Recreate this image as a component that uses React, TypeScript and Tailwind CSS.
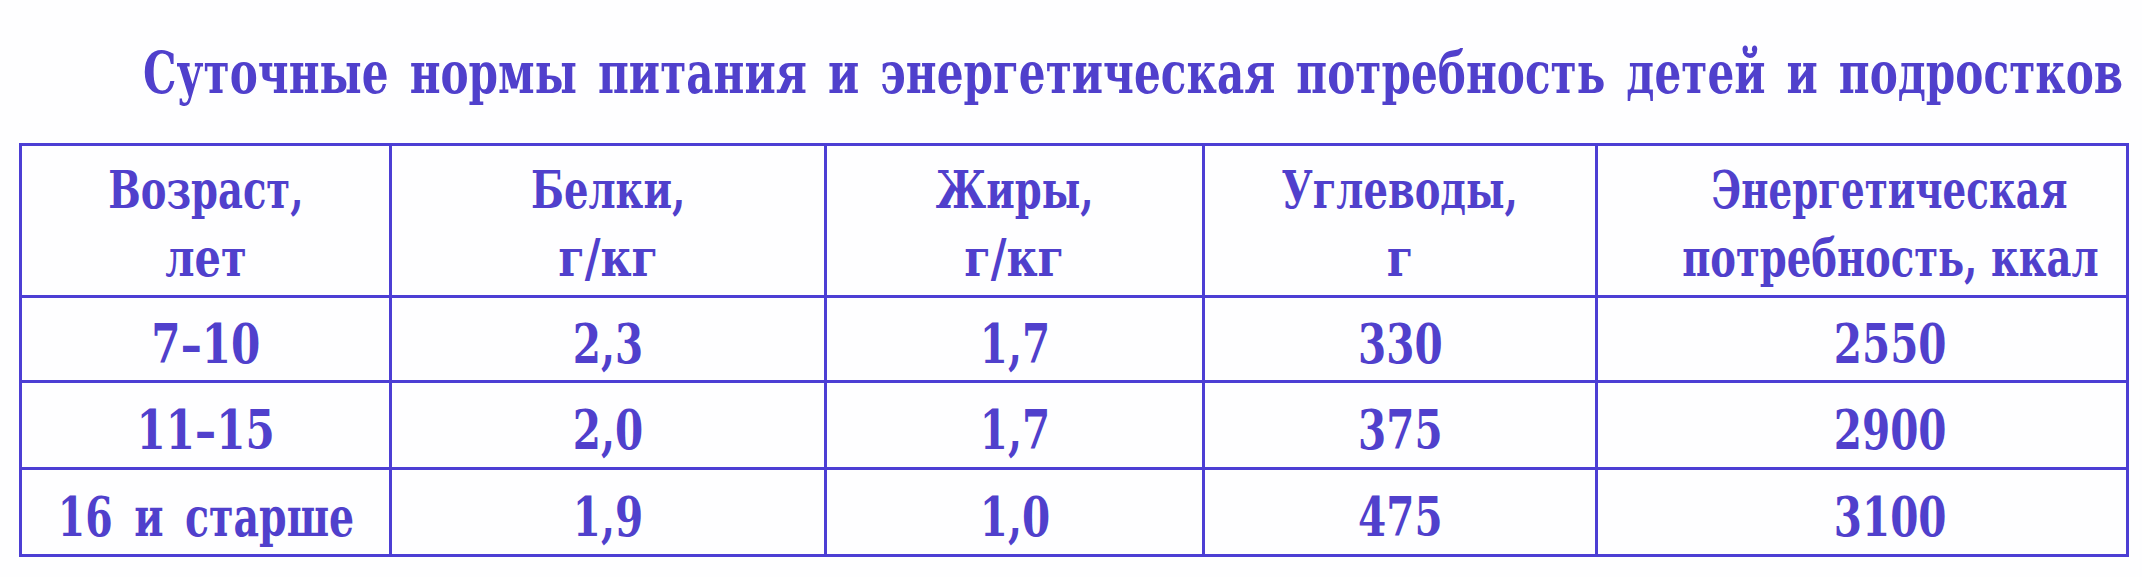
const rows = [
  ['7–10', '2,3', '1,7', '330', '2550'],
  ['11–15', '2,0', '1,7', '375', '2900'],
  ['16 и старше', '1,9', '1,0', '475', '3100'],
];

const headers = [
  ['Возраст,', 'лет'],
  ['Белки,', 'г/кг'],
  ['Жиры,', 'г/кг'],
  ['Углеводы,', 'г'],
  ['Энергетическая', 'потребность, ккал'],
];

const colWidths = ['w-[370px]', 'w-[435px]', 'w-[378px]', 'w-[393px]', 'w-[531px]'];

// the printed face is a narrow schoolbook serif; DejaVu Serif is squeezed sideways to match.
const squeeze: Record<string, string> = {
  лет: 'scale-x-[0.8]',
  'г/кг': 'scale-x-[0.83]',
  г: 'scale-x-[0.83]',
  Энергетическая: 'scale-x-[0.716]',
  '16 и старше': 'scale-x-[0.73]',
  '7–10': 'scale-x-[0.78]',
  '11–15': 'scale-x-[0.78]',
};

// flex keeps the unscaled box centred even when it is wider than the cell
const Narrow = ({ children, digits }: { children: string; digits?: boolean }) => (
  <div className="flex justify-center">
    <span
      className={`shrink-0 origin-center whitespace-nowrap ${
        squeeze[children] ?? (digits ? 'scale-x-[0.75]' : 'scale-x-[0.74]')
      }`}
    >
      {children}
    </span>
  </div>
);

// last column's text sits right of centre in the print
const cellPad = (j: number) => (j === 4 ? 'pl-[56px]' : '');

export default function App() {
  return (
    <div className="min-h-screen overflow-hidden bg-[#fefeff] px-[19px] pt-[41px] font-['DejaVu_Serif',serif] font-bold text-[#5040cc]">
      <h1 className="pl-[124px] text-[58px] leading-[64px] whitespace-nowrap">
        <span className="inline-block origin-left scale-x-[0.727] [word-spacing:0.15em]">
          Суточные нормы питания и энергетическая потребность детей и подростков
        </span>
      </h1>
      <table className="mt-[38px] w-[2107px] table-fixed border-collapse border-[3px] border-[#4c3ed4]">
        <colgroup>
          {colWidths.map((w, i) => (
            <col key={i} className={w} />
          ))}
        </colgroup>
        <thead>
          <tr className="h-[152px]">
            {headers.map(([a, b], i) => (
              <th
                key={i}
                className={`border-[3px] border-[#4c3ed4] pt-[7px] text-center align-middle text-[52px] leading-[68px] font-bold ${cellPad(i)}`}
              >
                <Narrow>{a}</Narrow>
                <Narrow>{b}</Narrow>
              </th>
            ))}
          </tr>
        </thead>
        <tbody>
          {rows.map((r, i) => (
            <tr key={i} className={i === 0 ? 'h-[85px]' : 'h-[87px]'}>
              {r.map((c, j) => (
                <td
                  key={j}
                  className={`border-[3px] border-[#4c3ed4] pt-[10px] text-center align-middle text-[54px] leading-[60px] [word-spacing:0.2em] ${cellPad(j)}`}
                >
                  <Narrow digits>{c}</Narrow>
                </td>
              ))}
            </tr>
          ))}
        </tbody>
      </table>
    </div>
  );
}
